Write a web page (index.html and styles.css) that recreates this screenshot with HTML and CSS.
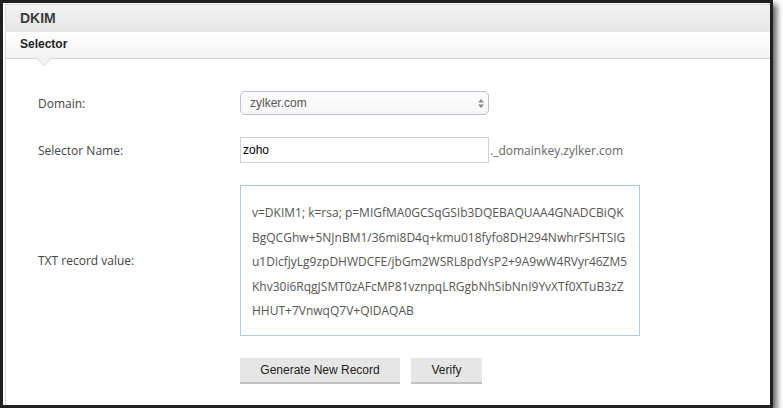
FILE: index.html
```html
<!DOCTYPE html>
<html>
<head>
<meta charset="utf-8">
<link rel="stylesheet" href="styles.css">
</head>
<body>
<div class="window">
	<div class="panel">
		<div class="panel_head">DKIM</div>
		<div class="tab_bar">
			<span class="tab">Selector</span>
		</div>
		<div class="form">
			<div class="row">
				<label class="lbl">Domain:</label>
				<span class="select_wrap">
					<select class="select">
						<option>zylker.com</option>
					</select>
					<svg class="arrows" width="6" height="9" viewBox="0 0 6 9">
						<path d="M3 0 L6 3.5 L0 3.5 Z" fill="#8a8a8a"/>
						<path d="M0 5.5 L6 5.5 L3 9 Z" fill="#8a8a8a"/>
					</svg>
				</span>
			</div>
			<div class="row">
				<label class="lbl">Selector Name:</label>
				<input type="text" class="text_in" value="zoho">
				<span class="suffix">._domainkey.zylker.com</span>
			</div>
			<div class="row">
				<label class="lbl">TXT record value:</label>
				<textarea class="txt" wrap="off">v=DKIM1; k=rsa; p=MIGfMA0GCSqGSIb3DQEBAQUAA4GNADCBiQK
BgQCGhw+5NJnBM1/36mi8D4q+kmu018fyfo8DH294NwhrFSHTSIG
u1DicfjyLg9zpDHWDCFE/jbGm2WSRL8pdYsP2+9A9wW4RVyr46ZM5
Khv30i6RqgJSMT0zAFcMP81vznpqLRGgbNhSibNnI9YvXTf0XTuB3zZ
HHUT+7VnwqQ7V+QIDAQAB</textarea>
			</div>
			<div class="row btn_row">
				<button class="btn gen">Generate New Record</button>
				<button class="btn verify">Verify</button>
			</div>
		</div>
	</div>
</div>
</body>
</html>
```

FILE: styles.css
```css
html, body {
	margin:0;
	padding:0;
	background:#fff;
}
.window {
	width:767px;
	height:402px;
	border:3px solid #202020;
	box-shadow:4px 4px 6px rgba(0,0,0,0.6);
	overflow:hidden;
	background:#fff;
}
.panel {
	margin:1px 0 0 2px;
	border-top:1px solid #dadada;
	border-left:1px solid #dadada;
	height:401px;
}
.panel_head {
	height:27px;
	line-height:26px;
	padding-left:14px;
	font-family:"Liberation Sans", Arial, sans-serif;
	font-weight:bold;
	font-size:14px;
	color:#3c3c3c;
	background:linear-gradient(#f3f3f3, #e6e6e6);
}
.tab_bar {
	position:relative;
	height:26px;
	border-bottom:1px solid #d4d4d4;
	background:linear-gradient(#ffffff, #f3f3f3);
}
.tab {
	display:inline-block;
	padding-left:14px;
	line-height:25px;
	font-family:"Liberation Sans", Arial, sans-serif;
	font-weight:bold;
	font-size:12px;
	color:#222;
}
.tab:after {
	content:"";
	position:absolute;
	left:31px;
	top:26px;
	width:0;
	height:0;
	border-left:7px solid transparent;
	border-right:7px solid transparent;
	border-top:7px solid #f3f3f3;
	filter:drop-shadow(0 1px 0 #d4d4d4);
}
.form {
	display:flex;
	flex-direction:column;
	gap:22px;
	padding:32px 0 0 32px;
}
.row {
	display:flex;
	align-items:center;
}
.lbl {
	width:202px;
	font-family:"Open Sans", sans-serif;
	font-size:12px;
	color:#444;
}
.select_wrap {
	position:relative;
	display:inline-block;
}
.select {
	-webkit-appearance:none;
	appearance:none;
	width:249px;
	height:24px;
	margin:0;
	padding:0 0 0 9px;
	border:1px solid #b8c2cf;
	border-radius:5px;
	background:linear-gradient(#fdfdfd, #f6f6f6);
	font-family:"Liberation Sans", Arial, sans-serif;
	font-size:12px;
	color:#555;
}
.arrows {
	position:absolute;
	right:5px;
	top:8px;
}
.text_in {
	width:249px;
	height:26px;
	box-sizing:border-box;
	margin:0;
	padding:0 2px;
	border:1px solid #d2d2d2;
	font-family:"Liberation Sans", Arial, sans-serif;
	font-size:12px;
	color:#000;
	outline:none;
}
.suffix {
	margin-left:1px;
	font-family:"Open Sans", sans-serif;
	font-size:12px;
	color:#666;
}
.txt {
	width:400px;
	height:151px;
	box-sizing:border-box;
	margin:0;
	padding:15px 0 0 11px;
	border:1px solid #a7cdec;
	font-family:"Open Sans", sans-serif;
	font-size:12px;
	line-height:24.5px;
	color:#555;
	resize:none;
	overflow:hidden;
	white-space:pre;
	outline:none;
}
.btn_row {
	padding-left:202px;
	gap:11px;
}
.btn {
	height:26px;
	margin:0;
	padding:0;
	border:0;
	border-bottom:2px solid #c2c2c2;
	background:#e6e6e6;
	font-family:"Liberation Sans", Arial, sans-serif;
	font-size:12px;
	color:#222;
	cursor:pointer;
}
.gen {
	width:160px;
}
.verify {
	width:71px;
}
```
